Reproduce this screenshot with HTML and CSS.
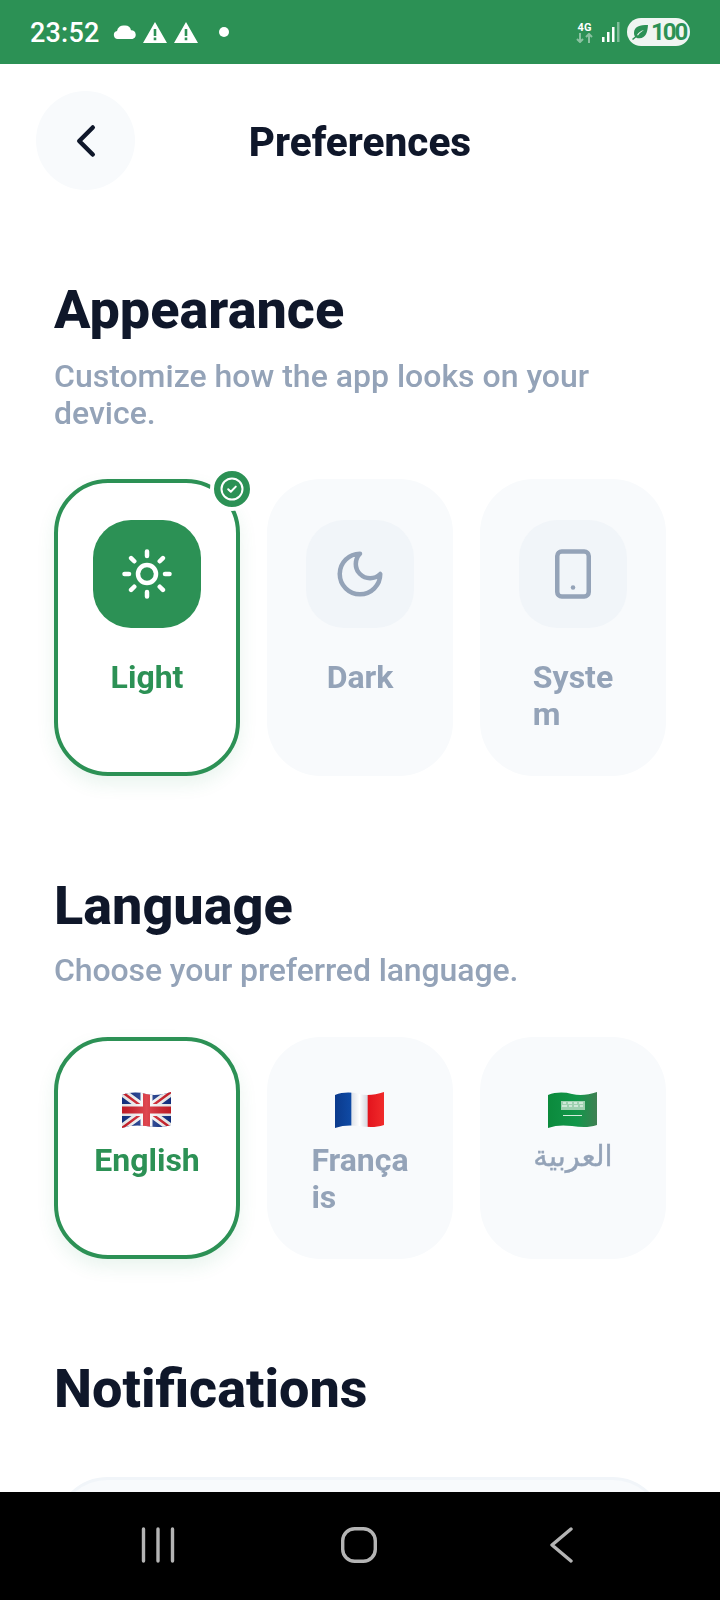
FILE: index.html
```html
<!DOCTYPE html>
<html>
    <head>
        <title>Preferences</title>
        <link rel="stylesheet" href="styles.css">
    </head>
    <body>
        <div class="phone">
            <!-- android status bar -->
            <div class="status-bar">
                <div class="status-left">
                    <span class="clock">23:52</span>
                    <svg class="st-cloud" width="24" height="14" viewBox="0 0 24 14"><path fill="#fff" d="M5 14a4 4 0 0 1-1-7.9A6.5 6.5 0 0 1 12 .6a6 6 0 0 1 6 4.6 4.5 4.5 0 0 1 1.500 8.800Z"/></svg>
                    <svg class="st-warn" width="24" height="21" viewBox="0 0 24 21"><path fill="#fff" fill-rule="evenodd" d="M12 0 24 21H0ZM10.700 7v7h2.600V7ZM10.700 15.500v2.700h2.600v-2.700Z"/></svg>
                    <svg class="st-warn" width="24" height="21" viewBox="0 0 24 21"><path fill="#fff" fill-rule="evenodd" d="M12 0 24 21H0ZM10.700 7v7h2.600V7ZM10.700 15.500v2.700h2.600v-2.700Z"/></svg>
                    <span class="st-dot"></span>
                </div>
                <div class="status-right">
                    <div class="net">
                        <span class="net-label">4G</span>
                        <svg width="17" height="10" viewBox="0 0 17 10"><path fill="none" stroke="#fff" stroke-opacity=".45" stroke-width="2" d="M4 0v9M1 6l3 3 3-3M13 10V1M10 4l3-3 3 3"/></svg>
                    </div>
                    <svg class="signal" width="18" height="20" viewBox="0 0 18 20">
                        <rect x="0" y="15" width="2.500" height="5" fill="#fff"/>
                        <rect x="5" y="10" width="2.500" height="10" fill="#fff"/>
                        <rect x="10" y="5" width="2.500" height="15" fill="#fff"/>
                        <rect x="15" y="0" width="2.500" height="20" fill="#fff" fill-opacity=".4"/>
                    </svg>
                    <div class="battery">
                        <svg width="16" height="15" viewBox="0 0 16 15"><path fill="#2c9155" d="M16 0C8 0 2 1.500 2 8c0 1.500.4 2.600 1 3.400L0 14l1 1 3-2.600c1 .6 2.200.8 3.500.8C14 13.200 15.500 7 16 0ZM5 10c1.500-2.500 3.500-4 7-5-2.500 1.500-4.500 3-6 5.500Z"/></svg>
                        <span>100</span>
                    </div>
                </div>
            </div>

            <div class="content">
                <div class="top-bar">
                    <div class="back-btn">
                        <svg class="lucide" viewBox="0 0 24 24"><path d="m15 18-6-6 6-6"/></svg>
                    </div>
                    <div class="page-title">Preferences</div>
                </div>

                <!-- Appearance -->
                <div class="section section-appearance">
                    <h2>Appearance</h2>
                    <p class="sub">Customize how the app looks on your device.</p>
                    <div class="options">
                        <div class="card active">
                            <span class="badge">
                                <svg width="24" height="24" viewBox="0 0 24 24"><circle cx="12" cy="12" r="10.500" fill="none" stroke="#fff" stroke-width="2"/><path d="m8.200 12.200 2.600 2.600 5-5.200" fill="none" stroke="#fff" stroke-width="2" stroke-linecap="round" stroke-linejoin="round"/></svg>
                            </span>
                            <div class="icon-box">
                                <svg class="lucide" viewBox="0 0 24 24">
                                    <circle cx="12" cy="12" r="4"/>
                                    <path d="M12 2v2M12 20v2M4.930 4.930l1.410 1.410M17.660 17.660l1.410 1.410M2 12h2M20 12h2M6.340 17.660l-1.410 1.410M19.070 4.930l-1.410 1.410"/>
                                </svg>
                            </div>
                            <div class="label">Light</div>
                        </div>
                        <div class="card">
                            <div class="icon-box">
                                <svg class="lucide" viewBox="0 0 24 24"><path d="M12 3a6 6 0 0 0 9 9 9 9 0 1 1-9-9Z"/></svg>
                            </div>
                            <div class="label">Dark</div>
                        </div>
                        <div class="card">
                            <div class="icon-box">
                                <svg class="lucide" viewBox="0 0 24 24"><rect x="5" y="2" width="14" height="20" rx="2"/><path d="M12 18h.01"/></svg>
                            </div>
                            <div class="label">Syste<br>m</div>
                        </div>
                    </div>
                </div>

                <!-- Language -->
                <div class="section section-language">
                    <h2>Language</h2>
                    <p class="sub">Choose your preferred language.</p>
                    <div class="options">
                        <div class="card active">
                            <div class="flag-box">
                                <svg width="49" height="36" viewBox="0 0 49 36">
                                    <defs>
                                        <clipPath id="wave-uk"><path d="M0 3C8 0 16 0 24 2s16 1 25-2v33c-9 3-17 2-25 1S8 33 0 36Z"/></clipPath>
                                        <linearGradient id="shine-uk"><stop offset="0" stop-color="#000" stop-opacity=".12"/><stop offset=".5" stop-color="#fff" stop-opacity=".18"/><stop offset="1" stop-color="#000" stop-opacity=".12"/></linearGradient>
                                    </defs>
                                    <g clip-path="url(#wave-uk)">
                                        <rect width="49" height="36" fill="#14348c"/>
                                        <path d="M0 0 49 36M49 0 0 36" stroke="#fff" stroke-width="8"/>
                                        <path d="M0 0 49 36M49 0 0 36" stroke="#d81f2a" stroke-width="2.500"/>
                                        <path d="M24.500 0v36M0 18h49" stroke="#fff" stroke-width="12"/>
                                        <path d="M24.500 0v36M0 18h49" stroke="#d81f2a" stroke-width="7"/>
                                        <rect width="49" height="36" fill="url(#shine-uk)"/>
                                    </g>
                                </svg>
                            </div>
                            <div class="label">English</div>
                        </div>
                        <div class="card">
                            <div class="flag-box">
                                <svg width="49" height="36" viewBox="0 0 49 36">
                                    <defs>
                                        <clipPath id="wave-fr"><path d="M0 3C8 0 16 0 24 2s16 1 25-2v33c-9 3-17 2-25 1S8 33 0 36Z"/></clipPath>
                                        <linearGradient id="shine-fr"><stop offset="0" stop-color="#0b3a8c"/><stop offset=".33" stop-color="#0f4aa5"/><stop offset=".34" stop-color="#dfe3ea"/><stop offset=".5" stop-color="#fff"/><stop offset=".66" stop-color="#d5d8e0"/><stop offset=".67" stop-color="#e3141d"/><stop offset="1" stop-color="#f02b2b"/></linearGradient>
                                    </defs>
                                    <rect width="49" height="36" fill="url(#shine-fr)" clip-path="url(#wave-fr)"/>
                                </svg>
                            </div>
                            <div class="label">França<br>is</div>
                        </div>
                        <div class="card">
                            <div class="flag-box">
                                <svg width="49" height="36" viewBox="0 0 49 36">
                                    <defs>
                                        <clipPath id="wave-sa"><path d="M0 3C8 0 16 0 24 2s16 1 25-2v33c-9 3-17 2-25 1S8 33 0 36Z"/></clipPath>
                                        <linearGradient id="shine-sa"><stop offset="0" stop-color="#0b8a3c"/><stop offset=".6" stop-color="#12964a"/><stop offset="1" stop-color="#3f7f52"/></linearGradient>
                                    </defs>
                                    <g clip-path="url(#wave-sa)">
                                        <rect width="49" height="36" fill="url(#shine-sa)"/>
                                        <rect x="13" y="9" width="24" height="9" fill="#9fd0b0"/>
                                        <path d="M15 11h3M20 11h4M26 11h3M31 11h4M14 14h5M21 14h3M26 14h4M32 14h3" stroke="#fff" stroke-width="1"/>
                                        <rect x="15" y="23" width="19" height="1" fill="#d7ecdd"/>
                                    </g>
                                </svg>
                            </div>
                            <div class="label label-ar" dir="rtl">العربية</div>
                        </div>
                    </div>
                </div>

                <!-- Notifications, cut off by the nav bar -->
                <div class="section section-notif">
                    <h2>Notifications</h2>
                    <div class="notif-card"></div>
                </div>
            </div>

            <!-- android nav bar -->
            <div class="nav-bar">
                <svg width="34" height="36" viewBox="0 0 34 36"><path d="M2.500 2v32M17 2v32M31.500 2v32" fill="none" stroke="#b4b4b4" stroke-width="3.400" stroke-linecap="round"/></svg>
                <svg class="nav-home" width="36" height="36" viewBox="0 0 36 36"><rect x="1.700" y="1.700" width="32.600" height="32.600" rx="12" fill="none" stroke="#b4b4b4" stroke-width="3.400"/></svg>
                <svg class="nav-back" width="23" height="36" viewBox="0 0 23 36"><path d="M21 2 2 18l19 16" fill="none" stroke="#b4b4b4" stroke-width="3.400" stroke-linecap="round" stroke-linejoin="round"/></svg>
            </div>
        </div>
    </body>
</html>
```

FILE: styles.css
```css
html, body {
    margin: 0;
    padding: 0;
}

body {
    font-family: Roboto, "Noto Sans", sans-serif;
    background: #fff;
}

.phone {
    width: 720px;
    height: 1600px;
    display: flex;
    flex-direction: column;
    overflow: hidden;
}

/* status bar */
.status-bar {
    height: 64px;
    flex: none;
    background: #2c9155;
    color: #fff;
    display: flex;
    justify-content: space-between;
    align-items: center;
    padding: 0 30px;
}

.status-left, .status-right {
    display: flex;
    align-items: center;
}

.clock {
    font-size: 27px;
    font-weight: 500;
    width: 83px;
    padding-top: 2px;
    letter-spacing: .2px;
}

.st-warn {
    margin-left: 7px;
}

.st-cloud {
    margin-right: -1px;
}

.st-dot {
    width: 10px;
    height: 10px;
    border-radius: 50%;
    background: #fff;
    margin-left: 21px;
}

.net {
    display: flex;
    flex-direction: column;
    align-items: center;
    margin-right: 9px;
}

.net-label {
    font-size: 11px;
    font-weight: 700;
    line-height: 11px;
}

.signal {
    margin-right: 7px;
}

.battery {
    width: 63px;
    height: 28px;
    box-sizing: border-box;
    padding-left: 5px;
    border-radius: 14px;
    background: #f0f5f2;
    color: #2c9155;
    display: flex;
    align-items: center;
    gap: 3px;
    font-size: 24px;
    font-weight: 700;
    letter-spacing: -2px;
}

/* page */
.content {
    flex: 1;
    overflow: hidden;
    padding: 27px 54px 0;
    will-change: opacity; /* keeps the text on grayscale antialiasing */
}

.lucide {
    width: 54px;
    height: 54px;
    fill: none;
    stroke: currentColor;
    stroke-width: 2;
    stroke-linecap: round;
    stroke-linejoin: round;
}

.top-bar {
    display: flex;
    align-items: center;
    height: 99px;
    margin-left: -18px;
}

.back-btn {
    width: 99px;
    height: 99px;
    flex: none;
    border-radius: 50%;
    background: #f8fafc;
    color: #0f172a;
    display: flex;
    align-items: center;
    justify-content: center;
}

.page-title {
    width: 450px;
    padding-top: 2px;
    text-align: center;
    font-size: 40.500px;
    font-weight: 800;
    color: #0f172a;
}

h2 {
    margin: 0;
    font-size: 54px;
    line-height: 64px;
    font-weight: 800;
    color: #0f172a;
}

.sub {
    margin: 16px 0 0;
    font-size: 32px;
    line-height: 37px;
    font-weight: 500;
    color: #94a3b8;
}

.section-appearance {
    margin-top: 88px;
}

.section-language {
    margin-top: 98px;
}

.section-language .sub {
    margin-top: 14px;
    letter-spacing: -.1px;
}

.section-notif {
    margin-top: 98px;
}

.options {
    display: grid;
    grid-template-columns: repeat(3, 1fr);
    gap: 27px;
    margin-top: 48px;
}

.section-appearance .options {
    margin-top: 47px;
}

.card {
    position: relative;
    box-sizing: border-box;
    min-height: 222px;
    padding: 37px 0;
    border: 4px solid transparent;
    border-radius: 54px;
    background: #f8fafc;
    display: flex;
    flex-direction: column;
    align-items: center;
}

.section-appearance .card {
    padding-bottom: 39px;
}

.card.active {
    background: #fff;
    border-color: #2c9155;
    box-shadow: 0 8px 18px rgba(44, 145, 85, .1);
}

.icon-box {
    width: 108px;
    height: 108px;
    border-radius: 38px;
    background: #f1f5f9;
    color: #94a3b8;
    display: flex;
    align-items: center;
    justify-content: center;
    margin-bottom: 31px;
}

.active .icon-box {
    background: #2c9155;
    color: #fff;
}

.flag-box {
    height: 65px;
    margin-top: -1px;
    padding-right: 2px;
    display: flex;
    align-items: center;
}

.label {
    font-size: 32px;
    line-height: 37px;
    font-weight: 700;
    color: #94a3b8;
    min-height: 74px;
}

.active .label {
    color: #2c9155;
}

.label-ar {
    margin-top: -4px;
    font-family: "DejaVu Sans", sans-serif;
    font-weight: 400;
    font-size: 29px;
    -webkit-text-stroke: .4px #94a3b8;
}

/* check mark on the selected card */
.badge {
    position: absolute;
    top: -16px;
    right: -18px;
    width: 36px;
    height: 36px;
    border: 4px solid #fff;
    border-radius: 50%;
    background: #2c9155;
    display: flex;
    align-items: center;
    justify-content: center;
}

.notif-card {
    height: 200px;
    margin-top: 56px;
    border: 3px solid #f1f5f9;
    border-radius: 54px;
    background: #f8fafc;
}

/* nav bar */
.nav-bar {
    height: 105px;
    padding-bottom: 3px;
    flex: none;
    background: #000;
    display: flex;
    align-items: center;
    padding-left: 141px;
}

.nav-home {
    margin-left: 166px;
}

.nav-back {
    margin-left: 173px;
}
```
